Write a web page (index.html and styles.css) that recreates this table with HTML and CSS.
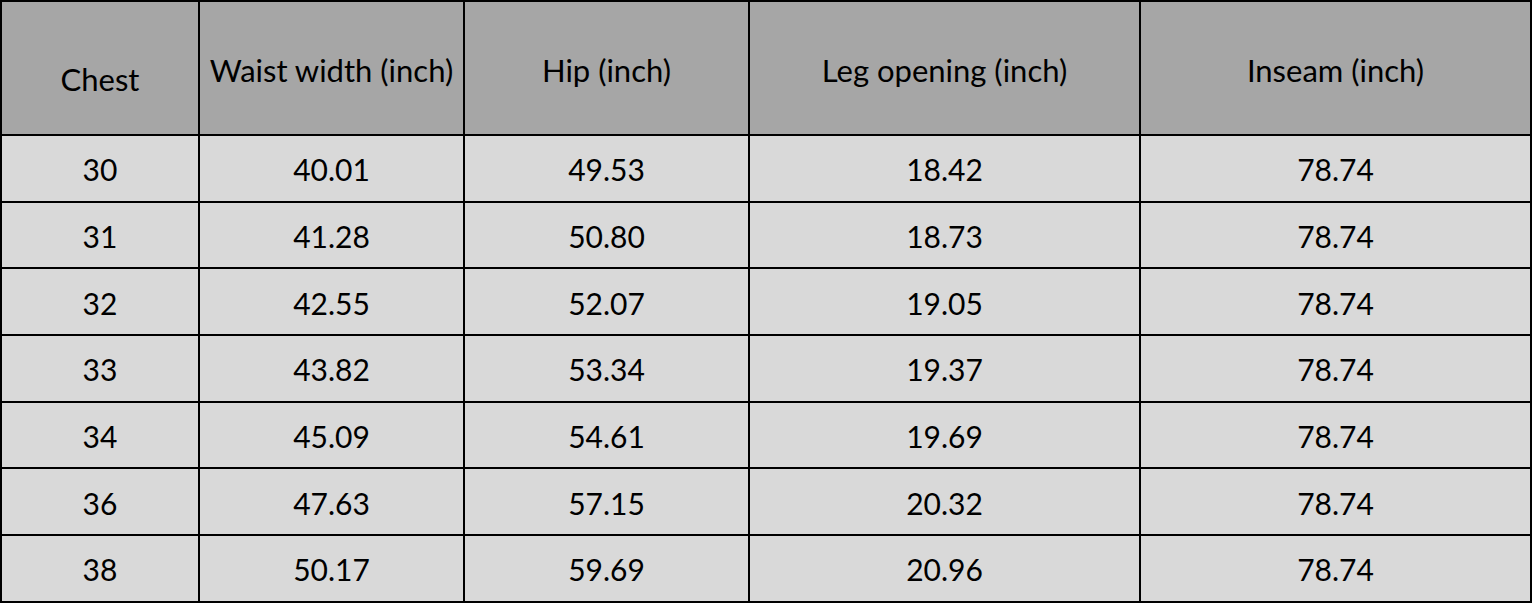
FILE: index.html
```html
<!DOCTYPE html>
<html lang="en">
<head>
<meta charset="utf-8">
<title>Size chart</title>
<link rel="stylesheet" href="styles.css">
</head>
<body>
<div class="chart" role="table">
  <div class="cell head chest" role="columnheader">Chest</div>
  <div class="cell head" role="columnheader">Waist width (inch)</div>
  <div class="cell head" role="columnheader">Hip (inch)</div>
  <div class="cell head" role="columnheader">Leg opening (inch)</div>
  <div class="cell head" role="columnheader">Inseam (inch)</div>

  <div class="cell">30</div><div class="cell">40.01</div><div class="cell">49.53</div><div class="cell">18.42</div><div class="cell">78.74</div>
  <div class="cell">31</div><div class="cell">41.28</div><div class="cell">50.80</div><div class="cell">18.73</div><div class="cell">78.74</div>
  <div class="cell">32</div><div class="cell">42.55</div><div class="cell">52.07</div><div class="cell">19.05</div><div class="cell">78.74</div>
  <div class="cell">33</div><div class="cell">43.82</div><div class="cell">53.34</div><div class="cell">19.37</div><div class="cell">78.74</div>
  <div class="cell">34</div><div class="cell">45.09</div><div class="cell">54.61</div><div class="cell">19.69</div><div class="cell">78.74</div>
  <div class="cell">36</div><div class="cell">47.63</div><div class="cell">57.15</div><div class="cell">20.32</div><div class="cell">78.74</div>
  <div class="cell">38</div><div class="cell">50.17</div><div class="cell">59.69</div><div class="cell">20.96</div><div class="cell">78.74</div>
</div>
</body>
</html>
```

FILE: styles.css
```css
html, body {
  margin: 0;
  padding: 0;
  background: #ffffff;
}

.chart {
  display: grid;
  width: 1532px;
  box-sizing: border-box;
  padding: 2px;
  gap: 2px;
  background: #000000;
  grid-template-columns: 196px 263px 283px 389px 389px;
  grid-template-rows: 132px repeat(7, 64.7px);
  font-family: Lato, "Liberation Sans", sans-serif;
  font-size: 30px;
  color: #000000;
}

.cell {
  background: #d9d9d9;
  display: flex;
  align-items: center;
  justify-content: center;
  padding-top: 2px;
  box-sizing: border-box;
  white-space: nowrap;
}

.head {
  background: #a6a6a6;
  font-size: 31px;
  padding-top: 3px;
}

.head.chest {
  padding-top: 22px;
}
```
